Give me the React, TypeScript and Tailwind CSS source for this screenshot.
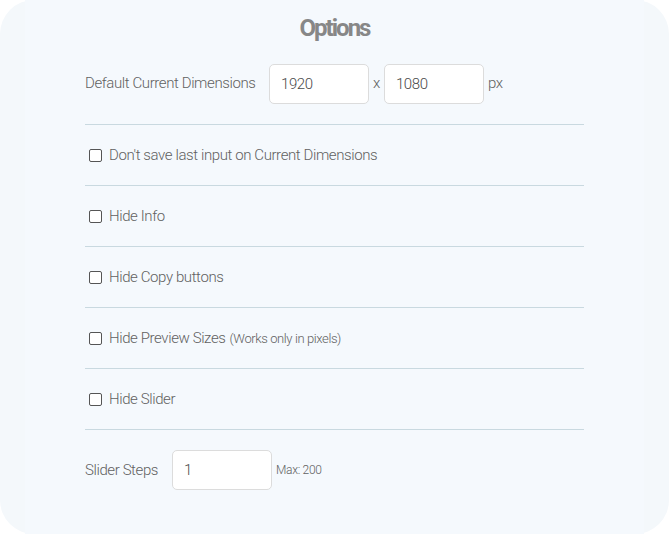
import { useState } from 'react'

const font = { fontFamily: 'Roboto, "Liberation Sans", sans-serif' }

const inputCls =
  'h-[40px] w-[100px] rounded-[5px] border border-[#dcdcdc] bg-white px-[11px] text-[15px] font-light tracking-[-0.4px] text-[#4a4a4a] outline-none'

function CheckRow({ label, note }: { label: string; note?: string }) {
  const [checked, setChecked] = useState(false)
  return (
    <label className="flex h-[61px] items-center border-b border-[#c9d9e0] pl-1 cursor-pointer">
      <input
        type="checkbox"
        checked={checked}
        onChange={() => setChecked(c => !c)}
        className="h-[13px] w-[13px] appearance-none rounded-[2px] border border-[#555] bg-white"
      />
      <span className="ml-[7px] text-[15px] font-light tracking-[-0.4px] text-[#616161]">
        {label}
        {note && <span className="ml-1 text-[13px] tracking-[-0.4px]">{note}</span>}
      </span>
    </label>
  )
}

export default function App() {
  const [width, setWidth] = useState('1920')
  const [height, setHeight] = useState('1080')
  const [steps, setSteps] = useState('1')

  return (
    <div className="h-[534px] w-[669px] bg-white" style={font}>
      <div className="h-full w-full rounded-[34px] bg-[#f4f8fb] px-[25px]">
        <div className="h-full bg-[#f5f9fd] px-[60px] pt-[13px]">
          <h1 className="text-center text-[24px] font-bold leading-[30px] tracking-[-2px] text-[#878787]">
            Options
          </h1>

          {/* Dimensions */}
          <div className="flex h-[82px] items-center border-b border-[#c9d9e0] text-[15px] font-light tracking-[-0.4px] text-[#616161]">
            <span className="w-[184px]">Default Current Dimensions</span>
            <input value={width} onChange={e => setWidth(e.target.value)} className={inputCls} />
            <span className="mx-[4px]">x</span>
            <input value={height} onChange={e => setHeight(e.target.value)} className={inputCls} />
            <span className="ml-[4px]">px</span>
          </div>

          <CheckRow label="Don't save last input on Current Dimensions" />
          <CheckRow label="Hide Info" />
          <CheckRow label="Hide Copy buttons" />
          <CheckRow label="Hide Preview Sizes" note="(Works only in pixels)" />
          <CheckRow label="Hide Slider" />

          {/* Slider steps */}
          <div className="flex h-[80px] items-center text-[15px] font-light tracking-[-0.4px] text-[#616161]">
            <span className="w-[87px]">Slider Steps</span>
            <input value={steps} onChange={e => setSteps(e.target.value)} className={inputCls} />
            <span className="ml-[4px] text-[12px] tracking-[-0.3px]">Max: 200</span>
          </div>
        </div>
      </div>
    </div>
  )
}
